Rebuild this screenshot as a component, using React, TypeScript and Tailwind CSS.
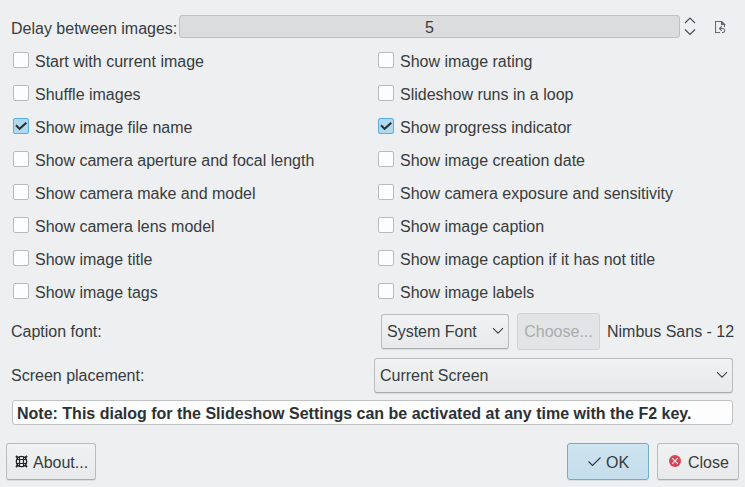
const LEFT: [string, boolean][] = [
  ["Start with current image", false],
  ["Shuffle images", false],
  ["Show image file name", true],
  ["Show camera aperture and focal length", false],
  ["Show camera make and model", false],
  ["Show camera lens model", false],
  ["Show image title", false],
  ["Show image tags", false],
];
const RIGHT: [string, boolean][] = [
  ["Show image rating", false],
  ["Slideshow runs in a loop", false],
  ["Show progress indicator", true],
  ["Show image creation date", false],
  ["Show camera exposure and sensitivity", false],
  ["Show image caption", false],
  ["Show image caption if it has not title", false],
  ["Show image labels", false],
];

function Option({ label, checked }: { label: string; checked: boolean }) {
  return (
    <label className="flex h-[33px] items-start gap-1.5">
      <span
        className={
          "mt-[7px] flex size-4 shrink-0 items-center justify-center rounded-[2px] border " +
          (checked ? "border-[#5cafdc] bg-[#b0d9f0]" : "border-[#b8babc] bg-[#fdfdfe]")
        }
      >
        {checked && (
          <svg width="14" height="14" viewBox="0 0 14 14" fill="none" stroke="#293238" strokeWidth="2.1">
            <path d="M2 6.3 5.6 9.9 12.3 3.8" />
          </svg>
        )}
      </span>
      <span className="mt-[6px] leading-[22px]">{label}</span>
    </label>
  );
}

function Chevron() {
  return (
    <svg width="12" height="8" viewBox="0 0 12 8" fill="none" stroke="#3b4145" strokeWidth="1.1">
      <path d="M1 1.2 6 6.2 11 1.2" />
    </svg>
  );
}

const raised =
  "flex items-center rounded-[3px] border border-[#b9bbbd] border-b-[#a9abad] bg-linear-to-b from-[#f1f2f3] to-[#e8e9ea] shadow-[0_1px_0_#dadcde]";

export default function App() {
  return (
    <div className="flex h-[487px] w-[745px] flex-col overflow-hidden bg-[#eeeff1] font-['Liberation_Sans',Arial,sans-serif] text-[16px] whitespace-nowrap text-[#363c40]">
      <div className="flex h-[45px] items-start pt-[15px] pl-[11px]">
        <span className="mt-[3px] w-[168px] leading-[22px]">Delay between images:</span>
        <div className="h-[23px] w-[501px] rounded-[3px] border border-[#bec0c2] bg-[#dbdcdd] text-center leading-[23px]">5</div>
        <svg className="mt-[2px] ml-1" width="12" height="19" viewBox="0 0 12 19" fill="none" stroke="#4a4f53" strokeWidth="1.2">
          <path d="M1 6 6 1 11 6M1 12.5 6 17.5 11 12.5" />
        </svg>
        <svg className="mt-[6px] ml-[19px]" width="11" height="13" viewBox="0 0 11 13" fill="none" stroke="#65696c" strokeWidth="1.1">
          <path d="M5 11.5H.5V.5H6.5L9.5 3.5V6" />
          <path d="M6.5.5V3.5H9.5Z" fill="#65696c" />
          <path d="M6.8 5.2 4.5 7.5 6.8 9.8M4.5 7.5H8C10.2 7.5 10.2 11.5 8 11.5H7" />
        </svg>
      </div>
      <div className="grid h-[264px] grid-cols-[365px_1fr] pl-[13px]">
        <div>{LEFT.map(([label, checked]) => <Option key={label} label={label} checked={checked} />)}</div>
        <div>{RIGHT.map(([label, checked]) => <Option key={label} label={label} checked={checked} />)}</div>
      </div>
      <div className="flex h-[44px] items-center pl-[11px]">
        <span className="w-[370px] pt-0.5">Caption font:</span>
        <div className={`${raised} h-[35px] w-[128px] justify-between pr-1 pl-[5px]`}>
          <span className="pt-0.5">System Font</span>
          <Chevron />
        </div>
        <div className="ml-2 flex h-[37px] w-[83px] items-center justify-center rounded-[3px] border border-[#d0d2d3] bg-[#e2e4e5] pt-0.5 text-[#a9acae]">Choose...</div>
        <span className="ml-[7px] pt-0.5">Nimbus Sans - 12</span>
      </div>
      <div className="flex h-[44px] items-center pl-[11px]">
        <span className="w-[363px] pt-0.5">Screen placement:</span>
        <div className={`${raised} h-[35px] w-[359px] justify-between pr-1 pl-[5px]`}>
          <span className="pt-0.5">Current Screen</span>
          <Chevron />
        </div>
      </div>
      <div className="mt-[3px] ml-3 flex h-[25px] w-[721px] items-center rounded-[3px] border border-[#bfc1c3] bg-[#fdfdfe] pt-0.5 pl-1 font-bold text-[#2c3135]">
        Note: This dialog for the Slideshow Settings can be activated at any time with the F2 key.
      </div>
      <div className="mt-[18px] ml-[6px] flex">
        <button className={`${raised} h-[37px] w-[90px] pl-2`}>
          <svg className="-mt-px" width="13" height="13" viewBox="0 0 13 13" fill="none" stroke="#202427">
            <circle cx="6.5" cy="6.5" r="5.2" strokeWidth="1.3" />
            <rect x="4.5" y="4.5" width="4" height="4" rx="1" strokeWidth="1.2" />
            <path d="M4.5 1.5V4.5M8.5 1.5V4.5M4.5 8.5V11.5M8.5 8.5V11.5M1.5 4.5H4.5M8.5 4.5H11.5M1.5 8.5H4.5M8.5 8.5H11.5" strokeWidth="1" />
            <path d="M1 1 3 3M12 1 10 3M12 12 10 10M1 12 3 10" strokeWidth="1.8" />
          </svg>
          <span className="ml-[5px] pt-0.5">About...</span>
        </button>
        <button className="ml-[471px] flex h-[37px] w-[82px] items-center rounded-[3px] border border-[#76aaca] bg-linear-to-b from-[#cee4f0] to-[#c5deeb] pl-5 shadow-[0_1px_0_#d8dfe3]">
          <svg className="-mt-px" width="13" height="11" viewBox="0 0 13 11" fill="none" stroke="#30373b" strokeWidth="1.1">
            <path d="M.5 5.5 4.5 9.5 12.5 1.5" />
          </svg>
          <span className="ml-[5px] pt-0.5">OK</span>
        </button>
        <button className={`${raised} ml-2 h-[37px] w-[82px] pl-[11px]`}>
          <svg className="-mt-px" width="12" height="12" viewBox="0 0 12 12" fill="none">
            <circle cx="6" cy="6" r="6" fill="#d74456" />
            <path d="M3.2 3.2 8.8 8.8M8.8 3.2 3.2 8.8" stroke="#fbeef0" strokeWidth="1.1" />
          </svg>
          <span className="ml-[7px] pt-0.5">Close</span>
        </button>
      </div>
    </div>
  );
}
